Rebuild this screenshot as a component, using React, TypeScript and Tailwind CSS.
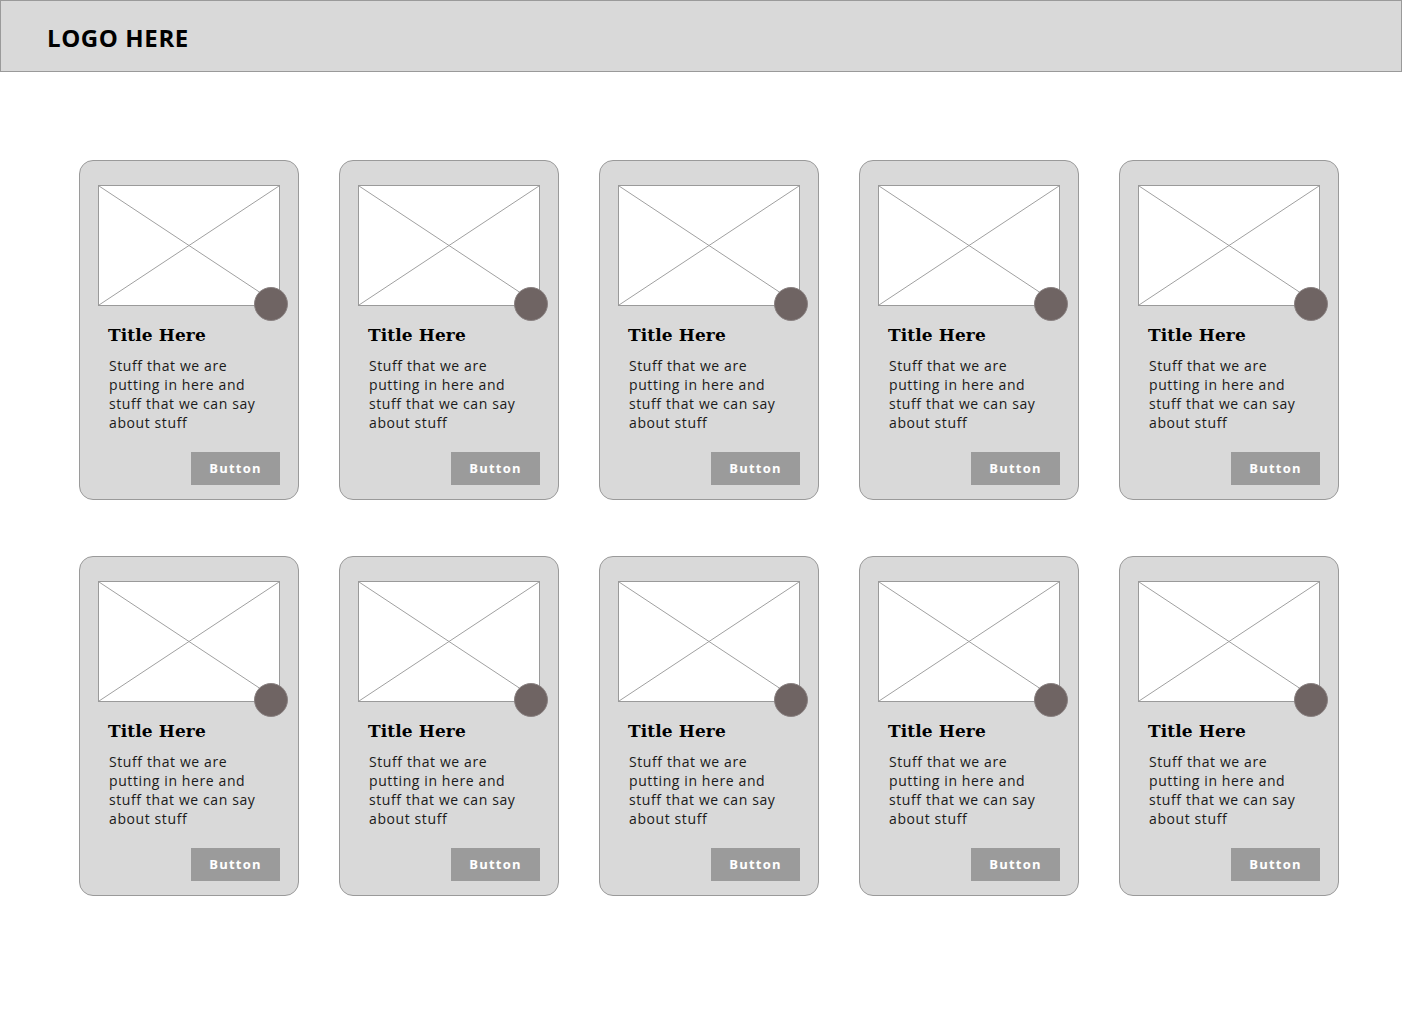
import React from 'react'

const cards = Array.from({ length: 10 }, (_, i) => i)

function Placeholder() {
  return (
    <div className="relative h-[121px] w-[182px] border border-[#9a9a9a] bg-white">
      <svg className="absolute inset-0 h-full w-full" viewBox="0 0 180 119" preserveAspectRatio="none">
        <line x1="0" y1="0" x2="180" y2="119" stroke="#a0a0a0" strokeWidth="1" vectorEffect="non-scaling-stroke" />
        <line x1="180" y1="0" x2="0" y2="119" stroke="#a0a0a0" strokeWidth="1" vectorEffect="non-scaling-stroke" />
      </svg>
      <div className="absolute left-[155px] top-[101px] h-[34px] w-[34px] rounded-full border border-[#8a8282] bg-[#6f6463]" />
    </div>
  )
}

function Card() {
  return (
    <div className="flex h-[340px] w-[220px] flex-col rounded-[14px] border border-[#9a9a9a] bg-[#d9d9d9] pl-[18px] pr-[18px] pt-[24px]">
      <Placeholder />
      <h2 className="mt-[18px] pl-[10px] font-['DejaVu_Serif',serif] text-[17px] font-bold leading-[22px] tracking-[0.1px] text-black">
        Title Here
      </h2>
      <p className="mt-[10px] w-[180px] pl-[11px] font-['Open_Sans',sans-serif] text-[14px] leading-[19px] tracking-[0.6px] text-[#1a1a1a]">
        Stuff that we are putting in here and stuff that we can say about stuff
      </p>
      <div className="mt-auto mb-[14px] flex justify-end">
        <button className="h-[33px] w-[89px] bg-[#9b9b9b] font-['Open_Sans',sans-serif] text-[13px] font-bold tracking-[1.2px] text-white">
          Button
        </button>
      </div>
    </div>
  )
}

export default function App() {
  return (
    <div className="min-h-screen bg-white">
      <header className="flex h-[72px] items-center border border-[#9a9a9a] bg-[#d9d9d9] pl-[46px] pt-[4px]">
        <span className="font-['Open_Sans',sans-serif] text-[24px] font-bold tracking-[0.6px] text-black">LOGO HERE</span>
      </header>
      <main className="grid grid-cols-[repeat(5,220px)] gap-x-[40px] gap-y-[56px] pl-[79px] pt-[88px]">
        {cards.map((i) => (
          <Card key={i} />
        ))}
      </main>
    </div>
  )
}
